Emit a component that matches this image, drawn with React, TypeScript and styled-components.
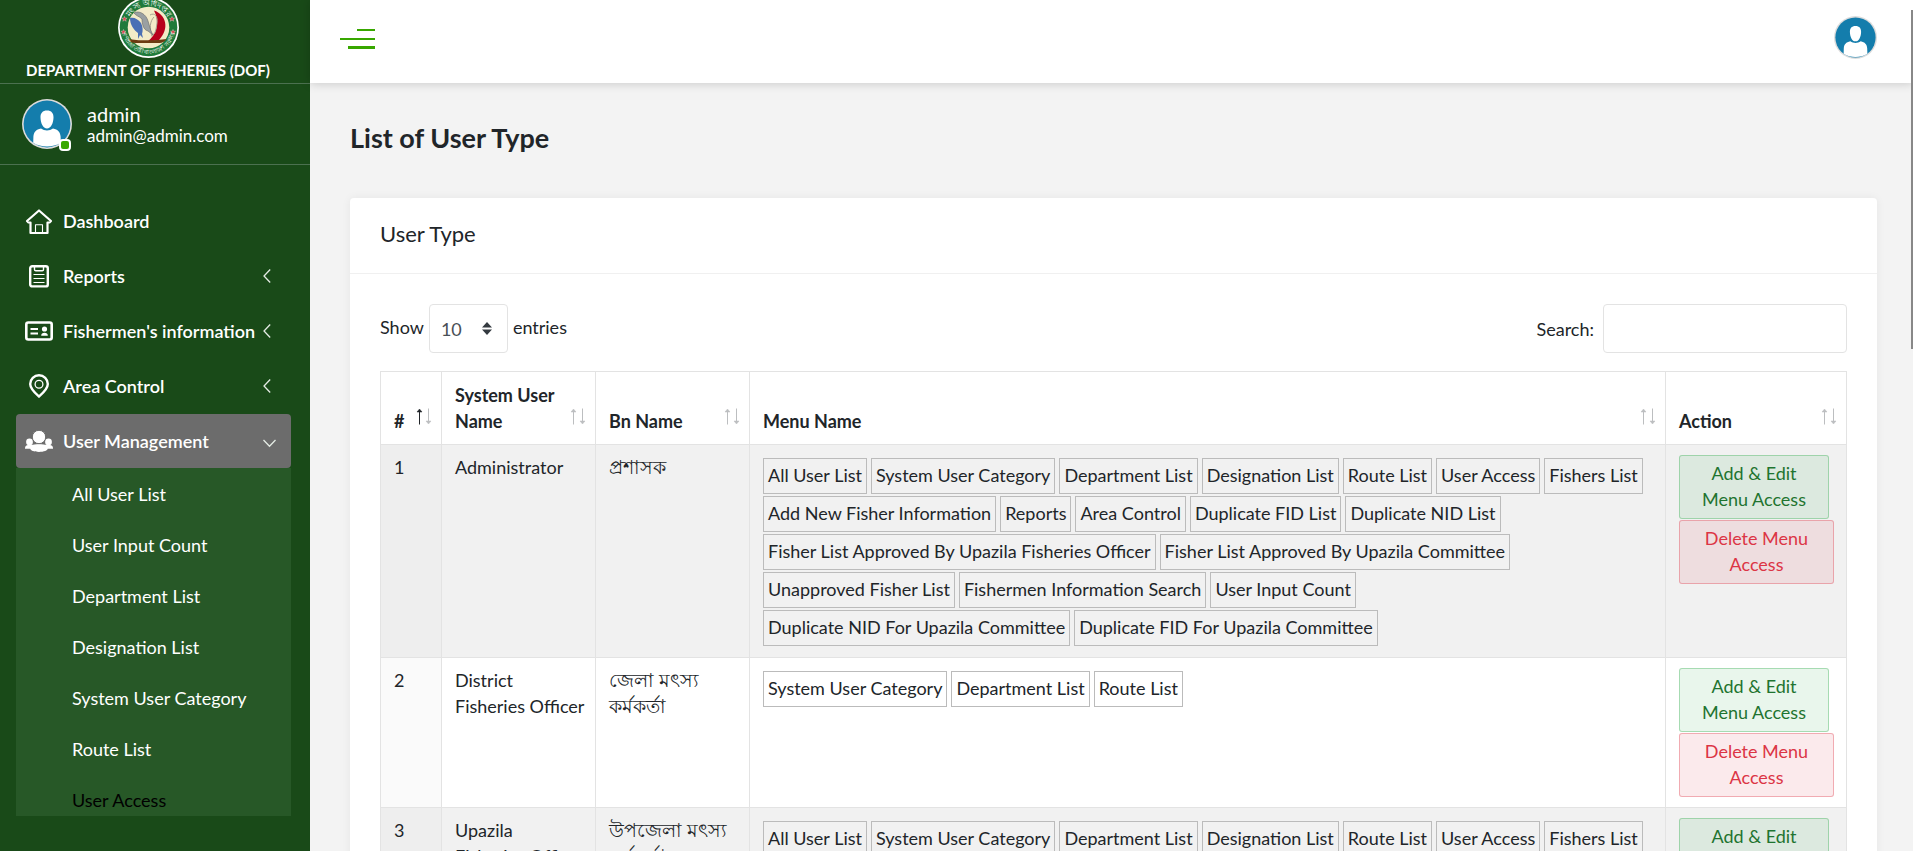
import React, { useState } from 'react';
import styled, { createGlobalStyle } from 'styled-components';

const GlobalStyle = createGlobalStyle`
  *, *::before, *::after { box-sizing: border-box; }
  body {
    margin: 0;
    background: #f3f3f3;
    color: #212529;
    font-family: Lato, "Noto Sans", sans-serif;
    font-size: 18px;
    line-height: 26px;
  }
  a { color: inherit; text-decoration: none; }
  button, input, select { font: inherit; color: inherit; margin: 0; }
  svg { display: block; flex: none; }
`;

const Page = styled.div`
  display: flex;
  height: 100vh;
  overflow: hidden;
  position: relative;
`;

const Sidebar = styled.aside`
  flex: none;
  width: 310px;
  display: flex;
  flex-direction: column;
  padding-bottom: 35px;
  background: #194a18;
  color: #fff;
`;

const Brand = styled.a`
  flex: none;
  display: flex;
  flex-direction: column;
  justify-content: flex-end;
  height: 84px;
  padding-bottom: 1px;
  border-bottom: 1px solid #4c7150;
`;

const BrandInner = styled.span`
  align-self: flex-start;
  display: flex;
  flex-direction: column;
  align-items: center;
  min-width: 252px;
  margin-left: 22px;
`;

const BrandName = styled.span`
  font-size: 15px;
  font-weight: 700;
  line-height: 24px;
`;

const Profile = styled.div`
  flex: none;
  display: flex;
  gap: 15px;
  height: 81px;
  padding: 15px 22px;
  border-bottom: 1px solid #4c7150;
`;

const AvatarHolder = styled.div`
  position: relative;
  height: 50px;
`;

const Status = styled.span`
  position: absolute;
  right: 1px;
  bottom: -2px;
  width: 12px;
  height: 12px;
  border: 2px solid #fff;
  border-radius: 4px;
  background: #38a700;
`;

const ProfileName = styled.div`
  font-size: 20px;
  line-height: 24px;
  padding-top: 3px;
`;

const ProfileMail = styled.div`
  font-size: 17px;
  line-height: 20px;
`;

const Nav = styled.nav`
  flex: 1;
  min-height: 0;
  overflow: hidden;
  padding: 29px 19px 0 16px;
`;

const NavList = styled.ul`
  display: grid;
  gap: 1px;
  margin: 0;
  padding: 0;
  list-style: none;
`;

const NavLink = styled.a<{ $active?: boolean }>`
  display: flex;
  align-items: center;
  height: 54px;
  padding: 0 15px 0 9px;
  border-radius: 4px;
  background: ${(p) => (p.$active ? '#6c6c6c' : 'transparent')};
  font-weight: 600;
`;

const NavLabel = styled.span`
  flex: 1;
  margin-left: 10px;
  white-space: nowrap;
`;

const SubList = styled.ul`
  margin: 0;
  padding: 1px 0 0;
  list-style: none;
  background: #275827;
`;

const SubLink = styled.a<{ $current?: boolean }>`
  display: block;
  padding-left: 56px;
  line-height: 51px;
  color: ${(p) => (p.$current ? '#000' : '#fff')};
`;

const Content = styled.div`
  flex: 1;
  min-width: 0;
`;

const TopBar = styled.header`
  position: relative;
  display: flex;
  align-items: flex-start;
  justify-content: space-between;
  height: 83px;
  padding: 16px 36px 0 30px;
  background: #fff;
  box-shadow: 0 0 10px rgba(0, 0, 0, 0.2);
`;

const BarButton = styled.button<{ $padY?: number }>`
  display: block;
  padding: ${(p) => p.$padY ?? 0}px 0;
  border: 0;
  background: none;
  cursor: pointer;
`;

const Main = styled.main`
  padding: 39px 36px 0 40px;
`;

const PageTitle = styled.h1`
  margin: 0 0 44px;
  font-size: 27px;
  line-height: 32px;
  font-weight: 700;
`;

const Card = styled.section`
  border-radius: 4px;
  background: #fff;
  box-shadow: 0 0 10px rgba(0, 0, 0, 0.06);
`;

const CardTitle = styled.h2`
  margin: 0;
  padding: 23px 30px 26px;
  border-bottom: 1px solid #f0f0f0;
  font-size: 22px;
  line-height: 26px;
  font-weight: 400;
`;

const CardBody = styled.div`
  padding: 30px;
`;

const Controls = styled.div`
  display: flex;
  justify-content: space-between;
  margin-bottom: 18px;
`;

const Field = styled.label<{ $gap: number }>`
  display: flex;
  align-items: center;
  gap: ${(p) => p.$gap}px;
`;

const LengthText = styled.span`
  padding-bottom: 4px;
`;

const SelectHolder = styled.span`
  position: relative;
  color: #343a40;
  svg {
    position: absolute;
    top: 18px;
    right: 16px;
    pointer-events: none;
  }
`;

const LengthSelect = styled.select`
  display: block;
  appearance: none;
  width: 79px;
  height: 49px;
  padding: 0 11px;
  border: 1px solid #e3e3e3;
  border-radius: 4px;
  background: #fff;
  color: #495057;
`;

const SearchInput = styled.input`
  width: 244px;
  height: 49px;
  padding: 0 12px;
  border: 1px solid #e3e3e3;
  border-radius: 4px;
  background: #fff;
`;

const Table = styled.table`
  width: 100%;
  table-layout: fixed;
  border-collapse: collapse;
`;

const Col = styled.col<{ $width?: number }>`
  width: ${(p) => (p.$width ? `${p.$width}px` : 'auto')};
`;

const HeadCell = styled.th`
  padding: 10px 9px 10px 13px;
  border: 1px solid #e3e3e3;
  vertical-align: bottom;
`;

const SortButton = styled.button`
  display: flex;
  align-items: flex-end;
  justify-content: space-between;
  width: 100%;
  padding: 0;
  border: 0;
  background: none;
  font-weight: 700;
  text-align: left;
  cursor: pointer;
  svg { margin-bottom: 9px; }
`;

const Row = styled.tr`
  background: #fff;
  &:nth-child(odd) { background: #f1f1f1; }
`;

const Cell = styled.td<{ $sorted?: boolean }>`
  padding: 9px 6px 10px 13px;
  border: 1px solid #e3e3e3;
  vertical-align: top;
  background: ${(p) => (p.$sorted ? 'rgba(0, 0, 0, 0.02)' : 'transparent')};
  ${Row}:nth-child(odd) & {
    background: ${(p) => (p.$sorted ? 'rgba(0, 0, 0, 0.01)' : 'transparent')};
  }
`;

const BnText = styled.span`
  display: block;
  font-size: 19px;
`;

const Tags = styled.ul`
  display: flex;
  flex-wrap: wrap;
  gap: 2px 4px;
  margin: 0;
  padding: 4px 0 1px;
  list-style: none;
`;

const Tag = styled.li`
  padding: 3px 4px 5px;
  border: 1px solid #bbb;
  white-space: nowrap;
`;

const Actions = styled.div`
  display: grid;
  gap: 1px;
  padding: 1px 6px 0 0;
`;

const ActionButton = styled.button<{ $tone: 'green' | 'red' }>`
  margin-right: ${(p) => (p.$tone === 'green' ? 5 : 0)}px;
  padding: 4px 16px 6px;
  border: 1px solid ${(p) => (p.$tone === 'green' ? 'rgba(40, 167, 69, 0.35)' : 'rgba(220, 53, 69, 0.35)')};
  border-radius: 3px;
  background: ${(p) => (p.$tone === 'green' ? 'rgba(40, 167, 69, 0.1)' : 'rgba(220, 53, 69, 0.1)')};
  color: ${(p) => (p.$tone === 'green' ? '#1f7430' : '#dc3545')};
  cursor: pointer;
`;

const ScrollThumb = styled.div`
  position: absolute;
  top: 10px;
  right: 0;
  width: 2px;
  height: 339px;
  background: #888;
`;

const Logo = () => (
  <svg width="61" height="61" viewBox="0 0 61 61" aria-hidden="true">
    <defs>
      <path id="ringTop" d="M9 30.5a21.500 21.500 0 0 1 43 0" />
      <path id="ringBottom" d="M4 30.5a26.500 26.500 0 0 0 53 0" />
    </defs>
    <circle cx="30.5" cy="30.5" r="30.5" fill="#fff" />
    <circle cx="30.5" cy="30.5" r="28.8" fill="#1f7a3a" />
    <circle cx="30.5" cy="30.5" r="20.8" fill="#f3ebc8" />
    <path d="M36 13.500c12 4 16 18 5 29.500l-12 2c10-7 13-20 7-31.500z" fill="#b8001c" />
    <path d="M32 18c5-3 8 2 7 8s-1 11-6 13M36 20c-4 4-5 12-2 18" fill="none" stroke="#a9a391" strokeWidth="1" />
    <path d="M12 21c4-1 8 1 11 5 2 4 2 8 1 11l1 4-3-3-2 4 0-6c-4-3-8-8-8-15z" fill="#4a6fb5" />
    <path d="M16 16c5-3 12 1 14 8l3 10 2 4-5-4c-5-1-6-8-6-12-3-3-6-3-8-6z" fill="#9aa0a2" stroke="#666" strokeWidth="0.600" />
    <path d="M10.500 42c8 1.800 28 1.800 38 0-2 2.500-4 4-7 4h-24c-4 0-6-2-7-4z" fill="#6b3b12" />
    <g fill="#e0414e" stroke="#fff" strokeWidth="0.300">
      {[[6.5, 22], [5.5, 35], [54, 22], [55, 35]].map(([x, y]) => (
        <path key={`${x}-${y}`} transform={`translate(${x} ${y})`} d="M0-2.600L.8-.8 2.600-.8 1.200.4 1.700 2.300 0 1.200-1.700 2.300-1.200.4-2.600-.8-.8-.8z" />
      ))}
    </g>
    <text fill="#fff" fontSize="8" textAnchor="middle">
      <textPath href="#ringTop" startOffset="50%">মৎস্য অধিদপ্তর</textPath>
    </text>
    <text fill="#fff" fontSize="6" textAnchor="middle">
      <textPath href="#ringBottom" startOffset="50%">গণপ্রজাতন্ত্রী বাংলাদেশ সরকার</textPath>
    </text>
  </svg>
);

const Avatar = ({ size }: { size: number }) => (
  <svg width={size} height={size} viewBox="0 0 50 50" aria-hidden="true">
    <circle cx="25" cy="25" r="25" fill="#dcdcdc" />
    <circle cx="25" cy="25" r="23.400" fill="#147dac" />
    <path d="M25 11.500c4.500 0 6.600 2.700 6.500 7-.1 5.500-2.500 11-6.500 11s-6.400-5.500-6.500-11c-.1-4.300 2-7 6.500-7z" fill="#fff" />
    <path d="M19 29.500c3.500 2.600 8.500 2.600 12 0 5 1.200 7.200 3.500 7.600 8l.2 6.300c-8 5-19.600 5-27.600 0l.2-6.300c.4-4.500 2.600-6.800 7.600-8z" fill="#fff" />
  </svg>
);

const BarsIcon = () => (
  <svg width="35" height="20" viewBox="0 0 35 20" fill="#38a700" aria-hidden="true">
    <rect x="17" y="0" width="18" height="2" />
    <rect x="0" y="9" width="35" height="2" />
    <rect x="8" y="17" width="27" height="3" />
  </svg>
);

const navSvg = { width: 28, height: 28, viewBox: '0 0 28 28', fill: 'none', stroke: 'currentColor', 'aria-hidden': true } as const;

const HomeIcon = () => (
  <svg {...navSvg} strokeWidth="2.200" strokeLinejoin="round" strokeLinecap="round">
    <path d="M14 3.500L2 14l1.500 1.500h2V26h17V15.500h2L26 14z" />
    <path d="M10.500 25.500v-7.700h7v7.700" strokeWidth="1.100" />
  </svg>
);

const ReportIcon = () => (
  <svg {...navSvg}>
    <rect x="5.200" y="4.200" width="17.600" height="20.200" rx="2" strokeWidth="2.400" />
    <path d="M9.500 5v2.500c0 .8.500 1.300 1.300 1.300h6.400c.8 0 1.300-.5 1.300-1.300V5" strokeWidth="1.400" />
    <path d="M8.500 12.500h11M8.500 16.500h11M8.500 20.500h11" strokeWidth="1.200" />
  </svg>
);

const CardIcon = () => (
  <svg {...navSvg}>
    <rect x="1.300" y="5.500" width="25.400" height="17" rx="2" strokeWidth="2.600" />
    <path d="M5.500 12h7.500M5.500 16.500h7.500" strokeWidth="1.800" />
    <circle cx="19.500" cy="12" r="2.600" fill="currentColor" stroke="none" />
    <path d="M16.200 18.800c0-2.200 1.300-3 3.300-3s3.300.8 3.300 3z" fill="currentColor" stroke="none" />
  </svg>
);

const PinIcon = () => (
  <svg {...navSvg}>
    <path d="M14 24.500C10 21 5.200 17 5.200 12a8.800 8.800 0 0 1 17.600 0c0 5-4.800 9-8.800 12.500z" strokeWidth="2.400" />
    <circle cx="14" cy="12.200" r="3.900" strokeWidth="1.300" />
  </svg>
);

const UsersIcon = () => (
  <svg {...navSvg} fill="currentColor" stroke="none">
    <circle cx="4.500" cy="15" r="3.400" />
    <circle cx="23.500" cy="15" r="3.400" />
    <path d="M0 21c0-2.300 2-3.200 4.800-3.200h18.400c2.800 0 4.800.9 4.800 3.200v.8H0z" />
    <circle cx="14" cy="10" r="6.700" stroke="#6c6c6c" strokeWidth="1" />
    <path d="M5.200 21.500c0-3.200 3.600-4.300 8.800-4.300s8.800 1.100 8.800 4.300c0 2-4 3.400-8.800 3.400s-8.800-1.400-8.800-3.400z" />
  </svg>
);

const Chevron = ({ open }: { open?: boolean }) => (
  <svg width="13" height="16" viewBox="0 0 13 16" fill="none" stroke="#e4ebe4" strokeWidth="1.300" aria-hidden="true">
    <path d={open ? 'M.5 7l6 6.200 6-6.200' : 'M7.200 1.500L1 8l6.200 6.500'} />
  </svg>
);

const SortIcon = ({ ascending }: { ascending?: boolean }) => (
  <svg width="16" height="17" viewBox="0 0 16 17" aria-hidden="true">
    <g stroke={ascending ? '#212529' : '#bcbec0'} fill={ascending ? '#212529' : '#bcbec0'}>
      <path d="M3.500 2v14.500" />
      <path d="M3.500 1L6 4H1z" strokeWidth="0.500" />
    </g>
    <g stroke="#bcbec0" fill="#bcbec0">
      <path d="M12.500 .5V15" />
      <path d="M12.500 16L10 13h5z" strokeWidth="0.500" />
    </g>
  </svg>
);

const SelectCaret = () => (
  <svg width="10" height="13" viewBox="0 0 10 13" fill="currentColor" aria-hidden="true">
    <path d="M5 0l5 5.500H0zM5 13l5-5.500H0z" />
  </svg>
);

const menu = [
  { label: 'Dashboard', icon: <HomeIcon /> },
  { label: 'Reports', icon: <ReportIcon />, folds: true },
  { label: "Fishermen's information", icon: <CardIcon />, folds: true },
  { label: 'Area Control', icon: <PinIcon />, folds: true },
];

const userMenu = ['All User List', 'User Input Count', 'Department List', 'Designation List', 'System User Category', 'Route List', 'User Access'];

const columns = ['#', 'System User Name', 'Bn Name', 'Menu Name', 'Action'];

const commonMenus = ['All User List', 'System User Category', 'Department List', 'Designation List', 'Route List', 'User Access', 'Fishers List'];

const userTypes = [
  {
    name: 'Administrator',
    bn: 'প্রশাসক',
    menus: [
      ...commonMenus,
      'Add New Fisher Information', 'Reports', 'Area Control', 'Duplicate FID List', 'Duplicate NID List',
      'Fisher List Approved By Upazila Fisheries Officer', 'Fisher List Approved By Upazila Committee',
      'Unapproved Fisher List', 'Fishermen Information Search', 'User Input Count',
      'Duplicate NID For Upazila Committee', 'Duplicate FID For Upazila Committee',
    ],
  },
  { name: 'District Fisheries\u00a0Officer', bn: 'জেলা মৎস্য কর্মকর্তা', menus: ['System User Category', 'Department List', 'Route List'] },
  { name: 'Upazila Fisheries\u00a0Officer', bn: 'উপজেলা মৎস্য কর্মকর্তা', menus: commonMenus },
];

export default function App() {
  const [query, setQuery] = useState('');
  const [length, setLength] = useState('10');

  return (
    <Page>
      <GlobalStyle />
      <Sidebar>
        <Brand href="#">
          <BrandInner>
            <Logo />
            <BrandName>DEPARTMENT OF FISHERIES (DOF)</BrandName>
          </BrandInner>
        </Brand>
        <Profile>
          <AvatarHolder>
            <Avatar size={50} />
            <Status />
          </AvatarHolder>
          <div>
            <ProfileName>admin</ProfileName>
            <ProfileMail>admin@admin.com</ProfileMail>
          </div>
        </Profile>
        <Nav>
          <NavList>
            {menu.map((item) => (
              <li key={item.label}>
                <NavLink href="#">
                  {item.icon}
                  <NavLabel>{item.label}</NavLabel>
                  {item.folds && <Chevron />}
                </NavLink>
              </li>
            ))}
            <li>
              <NavLink href="#" $active>
                <UsersIcon />
                <NavLabel>User Management</NavLabel>
                <Chevron open />
              </NavLink>
              <SubList>
                {userMenu.map((label) => (
                  <li key={label}>
                    <SubLink href="#" $current={label === 'User Access'}>{label}</SubLink>
                  </li>
                ))}
              </SubList>
            </li>
          </NavList>
        </Nav>
      </Sidebar>
      <Content>
        <TopBar>
          <BarButton aria-label="Toggle menu" $padY={13}><BarsIcon /></BarButton>
          <BarButton aria-label="Account"><Avatar size={43} /></BarButton>
        </TopBar>
        <Main>
          <PageTitle>List of User Type</PageTitle>
          <Card>
            <CardTitle>User Type</CardTitle>
            <CardBody>
              <Controls>
                <Field $gap={5}>
                  <LengthText>Show</LengthText>
                  <SelectHolder>
                    <LengthSelect value={length} onChange={(e) => setLength(e.target.value)}>
                      {['10', '25', '50', '100'].map((n) => <option key={n}>{n}</option>)}
                    </LengthSelect>
                    <SelectCaret />
                  </SelectHolder>
                  <LengthText>entries</LengthText>
                </Field>
                <Field $gap={9}>
                  Search:
                  <SearchInput type="search" value={query} onChange={(e) => setQuery(e.target.value)} />
                </Field>
              </Controls>
              <Table>
                <colgroup>
                  <Col $width={61} />
                  <Col $width={154} />
                  <Col $width={154} />
                  <Col />
                  <Col $width={181} />
                </colgroup>
                <thead>
                  <tr>
                    {columns.map((label, i) => (
                      <HeadCell key={label} scope="col">
                        <SortButton>
                          {label}
                          <SortIcon ascending={i === 0} />
                        </SortButton>
                      </HeadCell>
                    ))}
                  </tr>
                </thead>
                <tbody>
                  {userTypes.map((type, i) => (
                    <Row key={type.name}>
                      <Cell $sorted>{i + 1}</Cell>
                      <Cell>{type.name}</Cell>
                      <Cell><BnText lang="bn">{type.bn}</BnText></Cell>
                      <Cell>
                        <Tags>
                          {type.menus.map((label) => <Tag key={label}>{label}</Tag>)}
                        </Tags>
                      </Cell>
                      <Cell>
                        <Actions>
                          <ActionButton $tone="green">Add &amp; Edit Menu Access</ActionButton>
                          <ActionButton $tone="red">Delete Menu Access</ActionButton>
                        </Actions>
                      </Cell>
                    </Row>
                  ))}
                </tbody>
              </Table>
            </CardBody>
          </Card>
        </Main>
      </Content>
      <ScrollThumb />
    </Page>
  );
}
